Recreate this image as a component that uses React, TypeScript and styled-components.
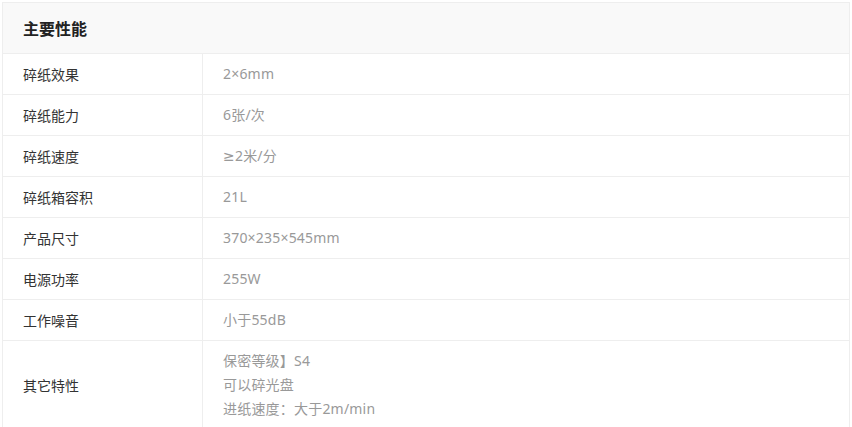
import * as React from "react";
import styled, { createGlobalStyle } from "styled-components";

const GlobalStyle = createGlobalStyle`
	html, body {
		margin: 0;
		padding: 0;
		background: #fff;
	}
	body {
		font-family: "Noto Sans", "DejaVu Sans", "Noto Sans CJK SC", sans-serif;
	}
`;

const StyledPage = styled.div`
	padding: 2px 2px 0 2px;
	width: 848px;
`;

const StyledPanel = styled.div`
	border: 1px solid #eeeeee;
	border-bottom: none;
`;

const StyledTitle = styled.div`
	height: 50px;
	display: flex;
	align-items: center;
	padding-left: 20px;
	background: #f9f9f9;
	border-bottom: 1px solid #eeeeee;
	font-size: 16px;
	font-weight: 700;
	color: #222;
`;

const StyledTable = styled.div`
	display: grid;
	grid-template-columns: 200px 1fr;
`;

const StyledLabel = styled.div`
	display: flex;
	align-items: center;
	min-height: 40px;
	padding-left: 20px;
	border-right: 1px solid #eeeeee;
	border-bottom: 1px solid #eeeeee;
	font-size: 14px;
	color: #333;
`;

const StyledValue = styled.div<{ $multi?: boolean }>`
	display: flex;
	flex-direction: column;
	justify-content: center;
	min-height: 40px;
	padding: ${(p) => (p.$multi ? "8px 20px" : "0 20px")};
	border-bottom: 1px solid #eeeeee;
	font-size: 14px;
	line-height: 24px;
	letter-spacing: 0.2px;
	color: #999;
`;

const specs: [string, string[]][] = [
	["碎纸效果", ["2×6mm"]],
	["碎纸能力", ["6张/次"]],
	["碎纸速度", ["≥2米/分"]],
	["碎纸箱容积", ["21L"]],
	["产品尺寸", ["370×235×545mm"]],
	["电源功率", ["255W"]],
	["工作噪音", ["小于55dB"]],
	["其它特性", ["保密等级】S4", "可以碎光盘", "进纸速度：大于2m/min"]],
];

const App: React.FC = () => {
	return (
		<StyledPage>
			<GlobalStyle />
			<StyledPanel>
				<StyledTitle>主要性能</StyledTitle>
				<StyledTable>
					{specs.map(([label, values]) => (
						<React.Fragment key={label}>
							<StyledLabel>{label}</StyledLabel>
							<StyledValue $multi={values.length > 1}>
								{values.map((v) => (
									<span key={v}>{v}</span>
								))}
							</StyledValue>
						</React.Fragment>
					))}
				</StyledTable>
			</StyledPanel>
		</StyledPage>
	);
};

export default App;
